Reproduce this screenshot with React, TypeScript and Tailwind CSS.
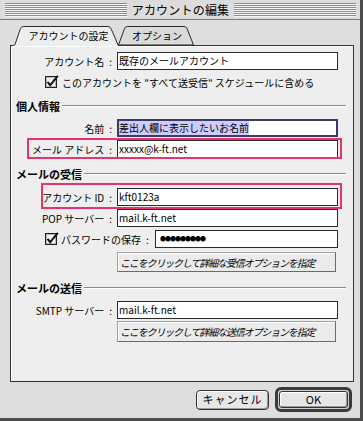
import React from "react";

const stripe =
  "h-[14px] flex-1 bg-[repeating-linear-gradient(to_bottom,#8c8c8c_0px,#8c8c8c_1px,#f6f6f6_1px,#f6f6f6_2px)]";

function CheckBox() {
  return (
    <svg width="14" height="14" viewBox="0 0 14 14" className="shrink-0">
      <rect x="0.5" y="1.5" width="11" height="11" fill="#f4f4f4" stroke="#222" />
      <rect x="1.5" y="2.5" width="9" height="9" fill="none" stroke="#b8b8b8" strokeWidth="1" />
      <path d="M2.5 6.8 L5.2 10.2 L12.8 0.8" fill="none" stroke="#111" strokeWidth="2" />
    </svg>
  );
}

function Field({
  value,
  className = "",
}: {
  value: React.ReactNode;
  className?: string;
}) {
  return (
    <div
      className={
        "h-[18px] bg-white border border-[#2a2a2a] flex items-center pl-[1px] text-[10px] leading-none whitespace-nowrap overflow-hidden " +
        className
      }
    >
      {value}
    </div>
  );
}

function Row({
  label,
  children,
  className = "",
}: {
  label: string;
  children: React.ReactNode;
  className?: string;
}) {
  return (
    <div className={"relative flex items-center " + className}>
      <div className="w-[102px] text-right pr-[1px] whitespace-nowrap">{label}</div>
      <div className="ml-[4px] w-[221px]">{children}</div>
    </div>
  );
}

function Header({ text, className = "" }: { text: string; className?: string }) {
  return (
    <div className={"flex items-center h-[14px] pl-[5px] pr-[7px] " + className}>
      <span className="font-bold text-[11px] whitespace-nowrap">{text}</span>
      <div className="flex-1 ml-[2px] h-[2px] border-t border-[#8a8a8a] border-b border-b-white" />
    </div>
  );
}

function OptButton({ text, className = "" }: { text: string; className?: string }) {
  return (
    <div
      className={
        "ml-[106px] w-[219px] flex items-center pl-[2px] bg-[#ebebeb] border border-[#a0a0a0] border-r-[#6a6a6a] border-b-[#6a6a6a] shadow-[inset_1px_1px_0_#ffffff] text-[10px] tracking-[-1.15px] italic whitespace-nowrap overflow-hidden " +
        className
      }
    >
      {text}
    </div>
  );
}

export default function App() {
  return (
    <div className="w-[363px] h-[421px] bg-[#dedede] border-r-[3px] border-b-[3px] border-[#4c4c4c] font-['Noto_Sans_CJK_JP','Noto_Sans',sans-serif] text-[10px] text-black overflow-hidden flex flex-col">
      {/* Title bar */}
      <div className="h-[20px] flex items-center pl-[5px] pr-[4px] border-b border-[#7a7a7a] bg-[#dcdcdc] shrink-0">
        <div className={stripe} />
        <div className="px-[5px] text-[12px] leading-none tracking-[0.2px] whitespace-nowrap">
          アカウントの編集
        </div>
        <div className={stripe} />
      </div>

      <div className="pl-[10px] pt-[6px]">
        {/* Tabs */}
        <div className="relative z-10 flex h-[20px] mb-[-1px]">
          <div className="relative w-[109px] h-[20px] flex items-center justify-center pl-[8px]">
            <svg className="absolute inset-0" width="109" height="20" viewBox="0 0 109 20">
              <path
                d="M0 20 L0 19.5 L3.5 19.5 Q5 19.5 5.5 17 L10.5 2.5 Q11.2 0.5 13.5 0.5 L98 0.5 Q100 0.5 101 2.5 L108.5 20 Z"
                fill="#eeeeee"
                stroke="none"
              />
              <path
                d="M0 19.5 L3.5 19.5 Q5 19.5 5.5 17 L10.5 2.5 Q11.2 0.5 13.5 0.5 L98 0.5 Q100 0.5 101 2.5 L108.5 20"
                fill="none"
                stroke="#2a2a2a"
              />
              <path d="M12 3 L7 18" stroke="#ffffff" strokeWidth="1" fill="none" />
            </svg>
            <span className="relative whitespace-nowrap leading-none">アカウントの設定</span>
          </div>
          <div className="relative w-[76px] h-[20px] -ml-[1px] flex items-center justify-center">
            <svg className="absolute inset-0" width="76" height="20" viewBox="0 0 76 20">
              <path
                d="M0.5 19 L6.5 2.5 Q7.2 0.5 9.5 0.5 L66 0.5 Q68 0.5 69 2.5 L75.5 19 Z"
                fill="#dadada"
                stroke="#2a2a2a"
              />
            </svg>
            <span className="relative whitespace-nowrap leading-none pl-[2px]">オプション</span>
          </div>
        </div>

        {/* Panel */}
        <div className="w-[344px] h-[337px] bg-[#eeeeee] border border-[#333333] shadow-[inset_1px_1px_0_#ffffff] flex flex-col">
          <Row label={"アカウント名\u2002:"} className="mt-[6px]">
            <Field value="既存のメールアカウント" />
          </Row>

          <div className="mt-[5px] h-[14px] flex items-center pl-[34px]">
            <CheckBox />
            <span className="ml-[3px] whitespace-nowrap">
              このアカウントを "すべて送受信" スケジュールに含める
            </span>
          </div>

          <Header text="個人情報" className="mt-[10px]" />

          <Row label={"名前\u2002:"} className="mt-[6px]">
            <div className="h-[18px] bg-white border-2 border-[#3c3a66] flex items-center whitespace-nowrap overflow-hidden">
              <span className="bg-[#ccccff] leading-[14px]">差出人欄に表示したいお名前</span>
            </div>
          </Row>

          <Row label={"メール アドレス\u2002:"} className="mt-[3px]">
            <Field value="xxxxx@k-ft.net" />
            <div className="absolute left-[16px] top-[-2px] w-[315px] h-[21px] border-2 border-[#e8336e] pointer-events-none" />
          </Row>

          <Header text="メールの受信" className="mt-[9px]" />

          <Row label={"アカウント ID\u2002:"} className="mt-[7px]">
            <Field value="kft0123a" />
            <div className="absolute left-[30px] top-[-5px] w-[301px] h-[26px] border-2 border-[#e8336e] pointer-events-none" />
          </Row>

          <Row label={"POP サーバー\u2002:"} className="mt-[3px]">
            <Field value="mail.k-ft.net" />
          </Row>

          <div className="mt-[3px] flex items-center pl-[34px]">
            <div className="w-[110px] flex items-center">
              <CheckBox />
              <span className="ml-[2px] whitespace-nowrap">{"パスワードの保存\u2002:"}</span>
            </div>
            <Field
              className="w-[183px]"
              value={<span className="text-[6px] tracking-[-1px] pl-[3px]">●●●●●●●●●</span>}
            />
          </div>

          <OptButton text="ここをクリックして詳細な受信オプションを指定" className="mt-[4px] h-[20px]" />

          <Header text="メールの送信" className="mt-[9px]" />

          <Row label={"SMTP サーバー\u2002:"} className="mt-[6px]">
            <Field value="mail.k-ft.net" />
          </Row>

          <OptButton text="ここをクリックして詳細な送信オプションを指定" className="mt-[2px] h-[21px]" />
        </div>

        {/* Bottom buttons */}
        <div className="flex justify-end items-center gap-[6px] pr-[8px] mt-[5px] h-[25px]">
          <div className="w-[73px] h-[20px] rounded-[4px] border border-[#333] bg-[#e6e6e6] shadow-[inset_1px_1px_0_#ffffff,inset_-1px_-1px_0_#9a9a9a] flex items-center justify-center text-[11px] tracking-[1px] whitespace-nowrap">
            キャンセル
          </div>
          <div className="w-[77px] h-[25px] rounded-[6px] border-[3px] border-[#3a3a3a] bg-[#cfcfcf] p-[1px] flex">
            <div className="flex-1 rounded-[3px] border border-[#333] bg-[#e6e6e6] shadow-[inset_1px_1px_0_#ffffff,inset_-1px_-1px_0_#9a9a9a] flex items-center justify-center text-[11px]">
              OK
            </div>
          </div>
        </div>
      </div>
    </div>
  );
}
